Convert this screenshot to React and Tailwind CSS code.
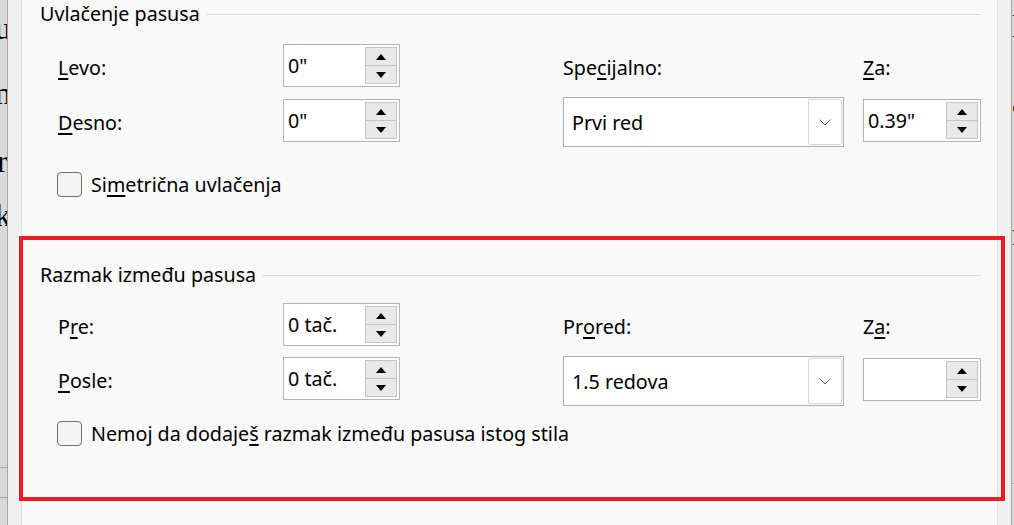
import React from 'react';

const Arrow = ({ up }) => (
  <svg width="10" height="6" viewBox="0 0 10 6">
    <path d={up ? 'M0 6 L5 0 L10 6 Z' : 'M0 0 L10 0 L5 6 Z'} fill="#000" />
  </svg>
);

const Spin = ({ value, wide }) => (
  <div className={`flex h-[43px] ${wide ? 'w-[118px]' : 'w-[117px]'} border border-[#b4b4b4] bg-white`}>
    <div className="flex flex-1 items-center pl-[4px]">{value}</div>
    <div className="my-[2px] mr-[2px] flex w-[32px] flex-col">
      <div className="flex flex-1 items-center justify-center border border-[#c4c4c4] bg-[#e9e9e9]">
        <Arrow up />
      </div>
      <div className="flex flex-1 items-center justify-center border border-t-0 border-[#c4c4c4] bg-[#e9e9e9]">
        <Arrow />
      </div>
    </div>
  </div>
);

const Select = ({ value }) => (
  <div className="flex h-[50px] w-[281px] border border-[#b0b0b0] bg-white">
    <div className="flex flex-1 items-center pl-[8px] pt-[1px]">{value}</div>
    <div className="my-[1px] mr-[1px] flex w-[34px] items-center justify-center rounded-[2px] border border-[#d6d6d6]">
      <svg width="12" height="7" viewBox="0 0 12 7">
        <path d="M0.5 0.5 L6 6 L11.5 0.5" fill="none" stroke="#606060" strokeWidth="1" />
      </svg>
    </div>
  </div>
);

// mnemonic underline
const U = ({ children }) => (
  <span className="underline decoration-[1.5px] underline-offset-[3px]">{children}</span>
);

const Heading = ({ children }) => (
  <div className="flex h-[28px] items-center">
    <span>{children}</span>
    <div className="ml-[6px] mr-[16px] h-px flex-1 bg-[#dcdcdc]" />
  </div>
);

const Row = ({ label, value }) => (
  <div className="flex h-[43px] items-center">
    <div className="w-[225px] pt-[4px]">{label}</div>
    <Spin value={value} />
  </div>
);

const Check = ({ children }) => (
  <div className="flex h-[25px] items-center pl-[17px]">
    <div className="h-[25px] w-[25px] rounded-[4px] border-[1.5px] border-[#6e6e6e] bg-[#f4f4f4]" />
    <span className="ml-[9px]">{children}</span>
  </div>
);

const Group = ({ rowGap, title, rows, selLabel, selValue, zaLabel, zaValue, check, checkGap, bodyGap }) => (
  <div>
    <Heading>{title}</Heading>
    <div className={`flex pl-[18px] ${bodyGap}`}>
      <div className={`flex w-[342px] flex-col ${rowGap}`}>
        {rows.map((r, i) => (
          <Row key={i} label={r.label} value={r.value} />
        ))}
      </div>
      <div className="ml-[163px] flex w-[281px] flex-col">
        <div className="flex h-[48px] items-center">{selLabel}</div>
        <div className="mt-[5px]">
          <Select value={selValue} />
        </div>
      </div>
      <div className="ml-[19px] flex flex-col">
        <div className="flex h-[48px] items-center">{zaLabel}</div>
        <div className="mt-[7px]">
          <Spin value={zaValue} wide />
        </div>
      </div>
    </div>
    <div className={checkGap}>
      <Check>{check}</Check>
    </div>
  </div>
);

export default function App() {
  return (
    <div className="relative flex h-[525px] w-[1014px] overflow-hidden bg-[#f0f0f0] font-['Noto_Sans',sans-serif] text-[19.7px] text-black">
      {/* document behind, left */}
      <div className="flex w-[7px] flex-col overflow-hidden bg-[#d9d9d9] font-['Liberation_Serif',serif] text-[32px] leading-none">
        <div className="-ml-[5px] mt-[12px]">u</div>
        <div className="-ml-[5px] mt-[33px]">n</div>
        <div className="-ml-[3px] mt-[36px]">r</div>
        <div className="-ml-[5px] mt-[22px]">k</div>
        <div className="mt-[236px] h-px bg-[#a8a8a8]" />
        <div className="mt-[29px] h-px bg-[#a8a8a8]" />
      </div>
      <div className="w-px bg-[#a6a6a6]" />
      <div className="w-[13px] bg-[#f0f0f0]" />
      <div className="w-px bg-[#e2e2e2]" />

      {/* dialog panel */}
      <div className="w-[975px] bg-[#f9f9f9] pl-[18px]">
        <Group
          title="Uvlačenje pasusa"
          bodyGap="mt-[16px]"
          rowGap="gap-[12px]"
          rows={[
            { label: <><U>L</U>evo:</>, value: '0"' },
            { label: <><U>D</U>esno:</>, value: '0"' },
          ]}
          selLabel={<>Spe<U>c</U>ijalno:</>}
          selValue="Prvi red"
          zaLabel={<><U>Z</U>a:</>}
          zaValue={'0.39"'}
          checkGap="mt-[25px]"
          check={<>Si<U>m</U>etrična uvlačenja</>}
        />
        <div className="mt-[64px]">
          <Group
            title="Razmak između pasusa"
            bodyGap="mt-[14px]"
            rowGap="gap-[11px]"
            rows={[
              { label: <>P<U>r</U>e:</>, value: '0 tač.' },
              { label: <><U>P</U>osle:</>, value: '0 tač.' },
            ]}
            selLabel={<>Pr<U>o</U>red:</>}
            selValue="1.5 redova"
            zaLabel={<>Z<U>a</U>:</>}
            zaValue=""
            checkGap="mt-[15px]"
            check={<>Nemoj da dodaje<U>š</U> razmak između pasusa istog stila</>}
          />
        </div>
      </div>

      <div className="w-px bg-[#e2e2e2]" />
      <div className="w-[13px] bg-[#f0f0f0]" />
      <div className="w-px bg-[#a6a6a6]" />
      {/* document behind, right */}
      <div className="flex w-[2px] flex-col overflow-hidden bg-[#d9d9d9] font-['Liberation_Serif',serif] text-[32px] leading-none">
        <div className="mt-[10px]">l</div>
        <div className="mt-[44px]">a</div>
        <div className="mt-[100px]">n</div>
        <div className="mt-[233px] h-px bg-[#a8a8a8]" />
      </div>

      {/* red annotation box */}
      <div className="absolute left-[19px] top-[236px] h-[265px] w-[986px] border-4 border-[#ec1c24]" />
    </div>
  );
}
